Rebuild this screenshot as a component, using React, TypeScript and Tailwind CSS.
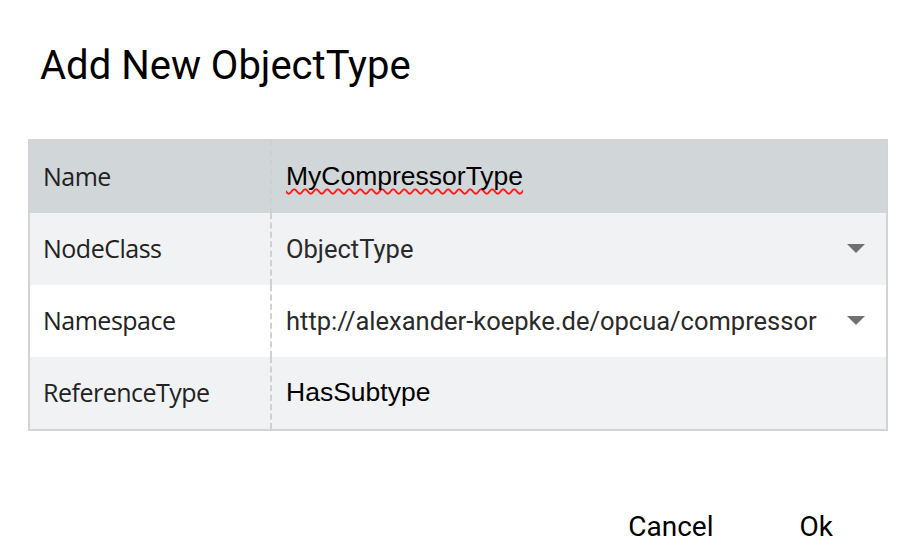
import React from 'react';

const Caret: React.FC = () => (
    <svg width="20" height="10" viewBox="0 0 20 10" className="shrink-0">
        <path d="M1 0 L19 0 L10 9 Z" fill="#707070" />
    </svg>
);

type Row = { label: string; value: string; kind: 'input' | 'select' | 'text'; bg: string };

const rows: Row[] = [
    { label: 'Name', value: 'MyCompressorType', kind: 'input', bg: 'bg-[#d1d6d9]' },
    { label: 'NodeClass', value: 'ObjectType', kind: 'select', bg: 'bg-[#f1f2f4]' },
    { label: 'Namespace', value: 'http://alexander-koepke.de/opcua/compressor', kind: 'select', bg: 'bg-white' },
    { label: 'ReferenceType', value: 'HasSubtype', kind: 'text', bg: 'bg-[#f1f2f4]' },
];

const App: React.FC = () => {
    return (
        <div className="w-[915px] h-[559px] bg-white overflow-hidden">
            <div className="pl-[40px] pt-[42px] h-[139px]">
                <h1 className="text-[40px] leading-[48px] font-normal text-black font-['Roboto',sans-serif]">
                    Add New ObjectType
                </h1>
            </div>

            <div className="ml-[28px] w-[860px] border-2 border-[#d3d3d3]">
                {rows.map(row => (
                    <div key={row.label} className={`flex h-[72px] ${row.bg}`}>
                        <div className="w-[242px] border-r-2 border-dashed border-[#d0d0d0] flex items-center pl-[13px] text-[25px] tracking-[-0.5px] text-[#222] font-['Open_Sans',sans-serif]">
                            {row.label}
                        </div>
                        <div className="flex-1 flex items-center pl-[14px] pr-[20px]">
                            {row.kind === 'input' && (
                                <span className="text-[26.5px] text-black font-['Liberation_Sans',Arial,sans-serif] underline decoration-wavy decoration-[#ff1a1a] decoration-[1.5px] underline-offset-[3px] [text-decoration-skip-ink:none]">
                                    {row.value}
                                </span>
                            )}
                            {row.kind === 'text' && (
                                <span className="text-[26.5px] text-black font-['Liberation_Sans',Arial,sans-serif]">
                                    {row.value}
                                </span>
                            )}
                            {row.kind === 'select' && (
                                <div className="flex-1 flex items-center justify-between">
                                    <span className="text-[25.5px] text-[#2a2a2a] font-['Roboto',sans-serif] whitespace-nowrap">{row.value}</span>
                                    <Caret />
                                </div>
                            )}
                        </div>
                    </div>
                ))}
            </div>

            <div className="flex justify-end items-center gap-[86px] pr-[82px] mt-[75px]">
                <button className="text-[28px] font-normal text-black font-['Roboto',sans-serif]">Cancel</button>
                <button className="text-[28px] font-normal text-black font-['Roboto',sans-serif]">Ok</button>
            </div>
        </div>
    );
};

export default App;
